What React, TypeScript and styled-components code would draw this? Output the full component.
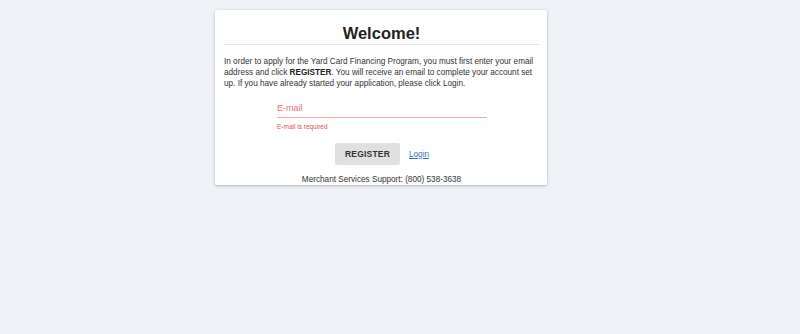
import React from "react";
import styled, { createGlobalStyle } from "styled-components";

const Global = createGlobalStyle`
  html, body { margin: 0; padding: 0; }
  body {
    background: #eef1f5;
    font-family: "Liberation Sans", Arial, sans-serif;
    width: 800px;
    height: 334px;
    overflow: hidden;
  }
`;

const Page = styled.div`
  display: flex;
  justify-content: center;
  padding-top: 10px;
  padding-right: 38px;
`;

const Card = styled.div`
  width: 332px;
  box-sizing: border-box;
  background: #fff;
  padding: 0 8px 0 9px;
  box-shadow: 0 1px 3px rgba(0, 0, 0, 0.25);
  border-radius: 2px;
  height: 175px;
`;

const Title = styled.h1`
  margin: 0;
  font-size: 16.5px;
  font-weight: bold;
  color: #222;
  text-align: center;
  padding-top: 12px;
  line-height: 22px;
  border-bottom: 1px solid #e6e6e6;
  height: 22px;
`;

const Intro = styled.p`
  margin: 11px 0 0 0;
  font-size: 8.2px;
  line-height: 11px;
  color: #333;
  strong { font-weight: bold; color: #222; }
`;

const Field = styled.div`
  width: 210px;
  margin: 13px auto 0;
  padding-left: 1px;
`;

const Label = styled.div`
  font-size: 9px;
  color: #e57373;
  line-height: 12px;
  height: 14px;
  border-bottom: 1px solid #f2aaaa;
  padding-bottom: 1px;
`;

const ErrorText = styled.div`
  font-size: 6.5px;
  color: #d9534f;
  margin-top: 4px;
  line-height: 9px;
`;

const Actions = styled.div`
  display: flex;
  justify-content: center;
  align-items: center;
  gap: 9px;
  margin-top: 12px;
  padding-left: 1px;
`;

const Button = styled.button`
  background: #e0e0e0;
  border: none;
  border-radius: 2px;
  width: 65px;
  height: 22px;
  font-family: "Liberation Sans", Arial, sans-serif;
  font-size: 8.5px;
  font-weight: bold;
  color: #333;
  letter-spacing: 0.2px;
  padding: 0;
`;

const LoginLink = styled.a`
  font-size: 8.2px;
  color: #2f72c0;
  text-decoration: underline;
`;

const Footer = styled.div`
  text-align: center;
  font-size: 8.2px;
  line-height: 11px;
  color: #333;
  margin-top: 9px;
`;

export default function App() {
  return (
    <>
      <Global />
      <Page>
        <Card>
          <Title>Welcome!</Title>
          <Intro>
            In order to apply for the Yard Card Financing Program, you must first enter your email
            address and click <strong>REGISTER</strong>. You will receive an email to complete your
            account set up. If you have already started your application, please click Login.
          </Intro>
          <Field>
            <Label>E-mail</Label>
            <ErrorText>E-mail is required</ErrorText>
          </Field>
          <Actions>
            <Button>REGISTER</Button>
            <LoginLink href="#">Login</LoginLink>
          </Actions>
          <Footer>Merchant Services Support: (800) 538-3638</Footer>
        </Card>
      </Page>
    </>
  );
}
